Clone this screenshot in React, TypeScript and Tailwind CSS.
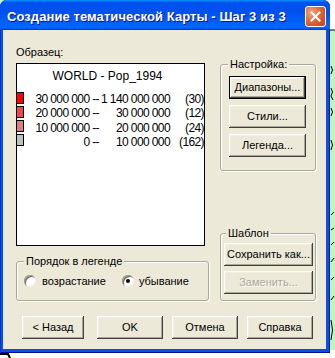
import React from "react";

const FONT = "font-['Liberation_Sans',Arial,sans-serif]";

function Btn({
  children,
  className = "",
  isDefault = false,
  disabled = false,
}: {
  children: React.ReactNode;
  className?: string;
  isDefault?: boolean;
  disabled?: boolean;
}) {
  return (
    <button
      type="button"
      className={
        "flex h-[23px] items-center justify-center bg-[#ece9d8] text-[11px] leading-[13px] shadow-[inset_-1px_-1px_#404040,inset_1px_1px_#ffffff,inset_-2px_-2px_#aca899,inset_2px_2px_#f1efe2] " +
        (isDefault ? "border border-black " : "") +
        (disabled ? "text-[#aca899] [text-shadow:1px_1px_#ffffff] " : "text-black ") +
        className
      }
    >
      {children}
    </button>
  );
}

function Group({
  label,
  labelLeft,
  className = "",
  children,
}: {
  label: string;
  labelLeft: string;
  className?: string;
  children?: React.ReactNode;
}) {
  return (
    <div
      className={
        "relative rounded-[3px] border border-[#aca899] shadow-[inset_1px_1px_#ffffff,1px_1px_#ffffff] " +
        className
      }
    >
      <span
        className={
          "absolute -top-[7px] bg-[#ece9d8] px-[2px] text-[11px] leading-[13px] text-black " +
          labelLeft
        }
      >
        {label}
      </span>
      {children}
    </div>
  );
}

function Radio({ checked }: { checked?: boolean }) {
  return (
    <span className="relative flex h-[12px] w-[12px] items-center justify-center rounded-full bg-white shadow-[inset_1px_1px_#aca899,inset_-1px_-1px_#f1efe2,inset_2px_2px_#716f64]">
      {checked && <span className="h-[4px] w-[4px] rounded-full bg-black" />}
    </span>
  );
}

const rows = [
  { color: "bg-[#ff0000]", a: "30 000 000 --", b: "1 140 000 000", c: "(30)" },
  { color: "bg-[#f04848]", a: "20 000 000 --", b: "30 000 000", c: "(12)" },
  { color: "bg-[#d88080]", a: "10 000 000 --", b: "20 000 000", c: "(24)" },
  { color: "bg-[#c0c0c0]", a: "0 --", b: "10 000 000", c: "(162)" },
];

export default function App() {
  return (
    <div className={"relative h-[358px] w-[335px] overflow-hidden bg-[#bff5bf] " + FONT}>
      <svg className="absolute inset-0" width="335" height="358" viewBox="0 0 335 358">
        <rect x="300" y="0" width="35" height="30" fill="#ffffff" />
        <path d="M300 30 L335 30" stroke="#000" strokeWidth="1" />
        <rect x="0" y="350" width="335" height="8" fill="#ffffff" />
        <path d="M0 354 L8 354 L10 358" stroke="#000" strokeWidth="2" fill="none" />
        <path d="M331 66 Q334 70 331 74 M331 88 Q334 92 331 96 L333 100 M331 108 Q334 112 331 116 M331 140 Q334 145 331 150 M331 215 L334 212 M331 230 L334 228 M331 245 L334 242 M331 262 L334 258 M331 280 L334 277 M331 300 L334 296 M331 320 Q334 330 331 340" stroke="#000" strokeWidth="1" fill="none" />
      </svg>

      <div className="relative z-10 flex h-[353px] w-[330px] flex-col rounded-t-[7px] bg-[#0a4fe0] shadow-[inset_1px_0_#0831d9,inset_-1px_0_#00138c,inset_0_-1px_#00138c]">
        {/* Title bar */}
        <div className="flex h-[30px] items-center justify-between rounded-t-[7px] bg-[linear-gradient(to_bottom,#0997ff,#0053ee_8%,#0050ee_40%,#0066ff_88%,#0066ff_93%,#005bff_95%,#003dd7_96%,#003dd7)] pl-[7px] pr-[4px] pt-[3px]">
          <span className="text-[13px] font-bold leading-[15px] tracking-[0.08px] text-white [text-shadow:1px_1px_#0f1089]">
            Создание тематической Карты - Шаг 3 из 3
          </span>
          <span className="flex h-[21px] w-[21px] items-center justify-center rounded-[3px] border border-white bg-[radial-gradient(circle_at_30%_30%,#f0a888,#e0683c_45%,#c43c14)]">
            <svg width="13" height="13" viewBox="0 0 13 13">
              <path d="M2.5 2.5 L10.5 10.5 M10.5 2.5 L2.5 10.5" stroke="#ffffff" strokeWidth="2" strokeLinecap="square" />
            </svg>
          </span>
        </div>

        {/* Body */}
        <div className="mb-[4px] ml-[3px] mr-[4px] flex flex-1 flex-col bg-[#ece9d8] text-black">
          <div className="flex pl-[13px]">
            {/* Left column */}
            <div className="flex w-[193px] flex-col pt-[16px]">
              <div className="h-[13px] text-[11px] leading-[13px]">Образец:</div>
              <div className="mt-[4px] flex h-[183px] w-[189px] flex-col border border-black bg-white pt-[5px] text-[12px] leading-[14px]">
                <div className="pr-[6px] text-center">WORLD - Pop_1994</div>
                <div className="mt-[9px] flex flex-col tracking-[-0.6px]">
                  {rows.map((r) => (
                    <div key={r.c} className="flex h-[14.33px] items-start">
                      <span className={"-ml-px mt-[-0.5px] h-[12px] w-[8px] shrink-0 border border-black " + r.color} />
                      <span className="w-[75px] shrink-0 whitespace-pre text-right">{r.a}</span>
                      <span className="w-[71px] shrink-0 whitespace-pre text-right">{r.b}</span>
                      <span className="flex-1 whitespace-pre text-right">{r.c}</span>
                    </div>
                  ))}
                </div>
              </div>
              <Group label="Порядок в легенде" labelLeft="left-[7px]" className="mt-[15px] flex h-[40px] w-[193px] items-center pl-[7px] text-[11px] leading-[13px]">
                <div className="flex items-center">
                  <Radio />
                  <span className="ml-[6px]">возрастание</span>
                </div>
                <div className="ml-[16px] flex items-center">
                  <Radio checked />
                  <span className="ml-[5px]">убывание</span>
                </div>
              </Group>
            </div>

            {/* Right column */}
            <div className="ml-[11px] flex w-[96px] flex-col pt-[34px]">
              <Group label="Настройка:" labelLeft="left-[7px]" className="flex h-[107px] flex-col gap-[6px] pl-[8px] pt-[11px]">
                <Btn isDefault className="w-[77px]">Диапазоны...</Btn>
                <Btn className="w-[77px]">Стили...</Btn>
                <Btn className="w-[77px]">Легенда...</Btn>
              </Group>
              <Group label="Шаблон" labelLeft="left-[5px]" className="mt-[62px] flex h-[68px] flex-col gap-[5px] pl-[3px] pt-[9px]">
                <Btn className="w-[89px]">Сохранить как...</Btn>
                <Btn disabled className="w-[89px]">Заменить...</Btn>
              </Group>
            </div>
          </div>

          {/* Bottom buttons */}
          <div className="mt-[15px] flex pl-[19px]">
            <Btn className="w-[62px]">&lt; Назад</Btn>
            <Btn className="ml-[13px] w-[66px]">OK</Btn>
            <Btn className="ml-[9px] w-[66px]">Отмена</Btn>
            <Btn className="ml-[9px] w-[66px]">Справка</Btn>
          </div>
        </div>
      </div>
    </div>
  );
}
